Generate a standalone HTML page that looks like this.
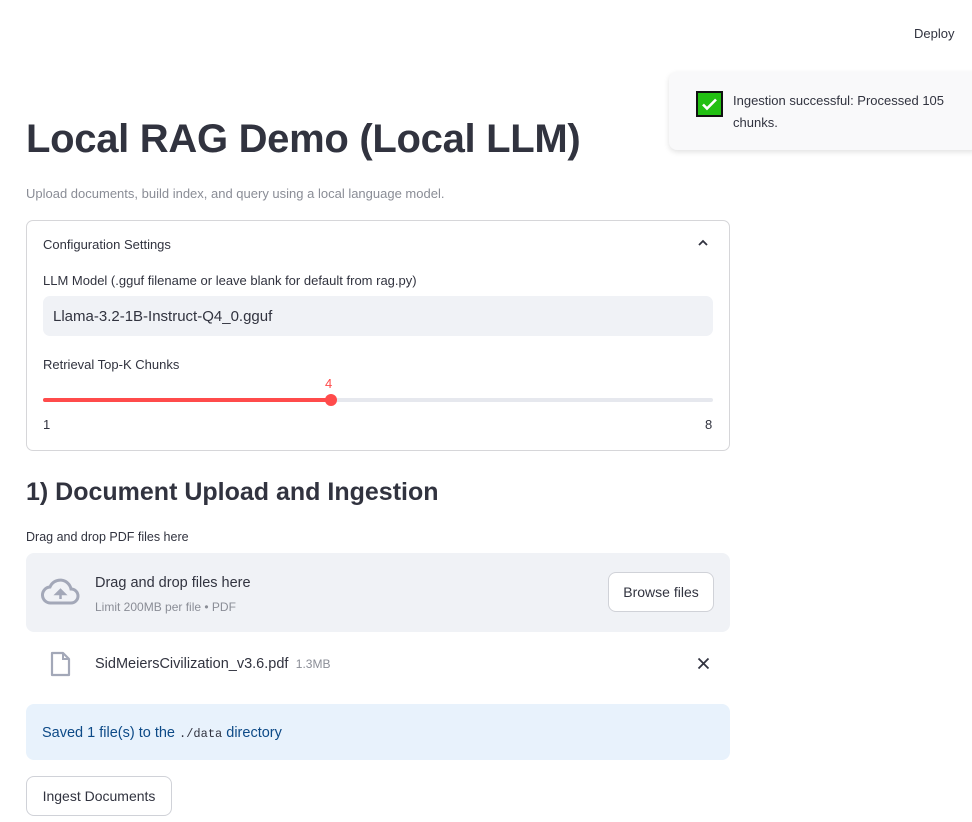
<!DOCTYPE html>
<html><head><meta charset="utf-8"><style>
*{box-sizing:border-box;margin:0;padding:0}
body{width:972px;height:822px;overflow:hidden;background:#fff;font-family:"Liberation Sans",sans-serif;color:#31333f;position:relative}
.a{position:absolute;white-space:nowrap}
</style></head><body>
<div class="a" style="left:914px;top:26px;font-size:13px;">Deploy</div>
<div class="a" style="left:669px;top:72px;width:310px;height:78px;background:#f9f9fa;border-radius:8px;box-shadow:0 2px 6px rgba(0,0,0,.12)"></div>
<div class="a" style="left:696px;top:91px;width:27px;height:26px;background:#22c012;border:2px solid #111"><svg width="23" height="22" viewBox="0 0 23 22"><path d="M5 11.5l4 4 9-9" stroke="#fff" stroke-width="2.6" fill="none"/></svg></div>
<div class="a" style="left:733px;top:90px;font-size:13px;line-height:22px;color:#31333f">Ingestion successful: Processed 105<br>chunks.</div>
<div class="a" style="left:26px;top:117px;font-size:40px;font-weight:bold;letter-spacing:-0.3px">Local RAG Demo (Local LLM)</div>
<div class="a" style="left:26px;top:186px;font-size:13px;color:#8a8d96">Upload documents, build index, and query using a local language model.</div>
<div class="a" style="left:26px;top:220px;width:704px;height:231px;border:1px solid #d6d6d9;border-radius:7px"></div>
<div class="a" style="left:43px;top:237px;font-size:13px">Configuration Settings</div>
<svg class="a" style="left:697px;top:238px" width="12" height="10" viewBox="0 0 12 10"><path d="M2 7l4-4 4 4" stroke="#31333f" stroke-width="1.8" fill="none"/></svg>
<div class="a" style="left:43px;top:273px;font-size:13px">LLM Model (.gguf filename or leave blank for default from rag.py)</div>
<div class="a" style="left:43px;top:296px;width:670px;height:40px;background:#f0f2f6;border-radius:7px"></div>
<div class="a" style="left:53px;top:308px;font-size:15px">Llama-3.2-1B-Instruct-Q4_0.gguf</div>
<div class="a" style="left:43px;top:357px;font-size:13px">Retrieval Top-K Chunks</div>
<div class="a" style="left:325px;top:376px;font-size:13px;color:#ff4b4b">4</div>
<div class="a" style="left:43px;top:398px;width:670px;height:4px;background:#e6e8ee;border-radius:2px"></div>
<div class="a" style="left:43px;top:398px;width:288px;height:4px;background:#ff4b4b;border-radius:2px"></div>
<div class="a" style="left:325px;top:394px;width:12px;height:12px;background:#ff4b4b;border-radius:50%"></div>
<div class="a" style="left:43px;top:417px;font-size:13px">1</div>
<div class="a" style="left:705px;top:417px;font-size:13px">8</div>
<div class="a" style="left:26px;top:478px;font-size:25px;font-weight:bold;letter-spacing:0px">1) Document Upload and Ingestion</div>
<div class="a" style="left:26px;top:530px;font-size:12.5px">Drag and drop PDF files here</div>
<div class="a" style="left:26px;top:553px;width:704px;height:79px;background:#f0f2f6;border-radius:8px"></div>
<svg class="a" style="left:41px;top:578px" width="39" height="28" viewBox="0 0 39 28"><path d="M10 25a8 8 0 0 1-1-16 11 11 0 0 1 21 2 7 7 0 0 1 0 14z" stroke="#a3a8b8" stroke-width="3" fill="none"/><path d="M19.5 21v-7M15.5 16l4-4 4 4z" stroke="#a3a8b8" stroke-width="2.5" fill="#a3a8b8"/></svg>
<div class="a" style="left:95px;top:575px;font-size:14.5px">Drag and drop files here</div>
<div class="a" style="left:95px;top:600px;font-size:12px;color:#8a8d96">Limit 200MB per file • PDF</div>
<div class="a" style="left:608px;top:572px;width:106px;height:40px;background:#fff;border:1px solid #d0d2d8;border-radius:8px;font-size:14px;line-height:38px;text-align:center">Browse files</div>
<svg class="a" style="left:50px;top:651px" width="21" height="26" viewBox="0 0 21 26"><path d="M2 2h11l6 6v16H2z" stroke="#a3a8b8" stroke-width="2.2" fill="none" stroke-linejoin="round"/><path d="M13 2v6h6" stroke="#a3a8b8" stroke-width="2" fill="none"/></svg>
<div class="a" style="left:95px;top:656px;font-size:14.5px">SidMeiersCivilization_v3.6.pdf <span style="font-size:12px;color:#8a8d96">&nbsp;1.3MB</span></div>
<svg class="a" style="left:697px;top:657px" width="13" height="13" viewBox="0 0 13 13"><path d="M1.5 1.5l10 10M11.5 1.5l-10 10" stroke="#31333f" stroke-width="1.8"/></svg>
<div class="a" style="left:26px;top:704px;width:704px;height:56px;background:#e8f2fc;border-radius:8px"></div>
<div class="a" style="left:42px;top:725px;font-size:14.5px;color:#0d4a87">Saved 1 file(s) to the <span style="font-family:'Liberation Mono',monospace;font-size:12px;color:#31333f">./data</span> directory</div>
<div class="a" style="left:26px;top:776px;width:146px;height:40px;background:#fff;border:1px solid #d0d2d8;border-radius:8px;font-size:14px;line-height:38px;text-align:center">Ingest Documents</div>
</body></html>
